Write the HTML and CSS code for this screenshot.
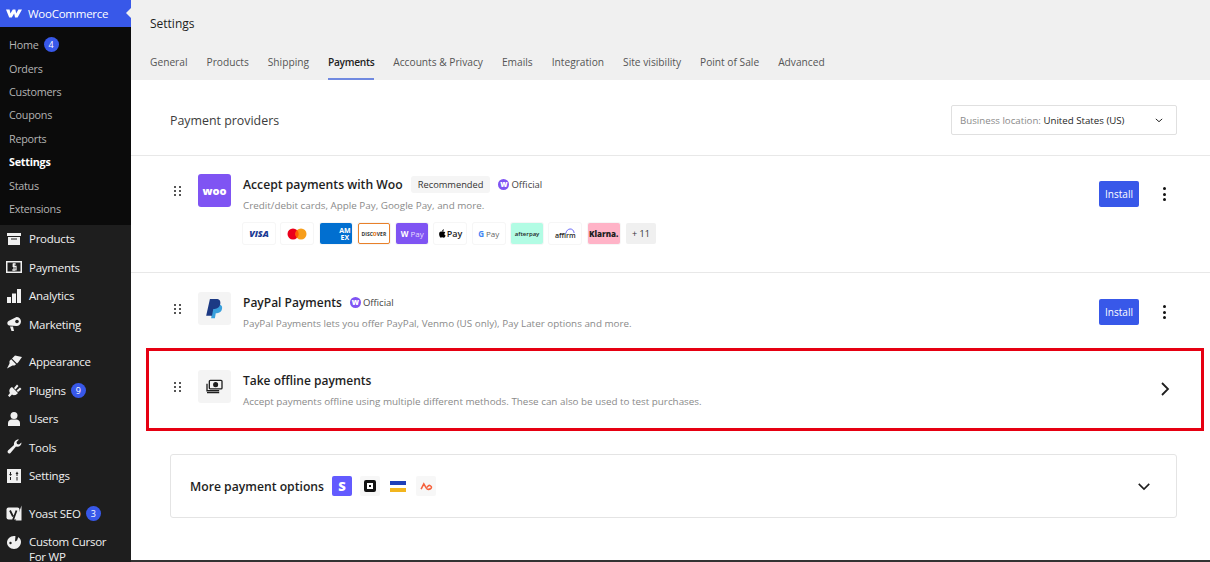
FILE: index.html
```html
<!DOCTYPE html>
<html lang="en">
<head>
    <meta charset="UTF-8">
    <title>Settings - Payments</title>
    <link rel="stylesheet" href="styles.css">
</head>
<body>
    <div class="layout">
        <aside class="sidebar">
            <div class="woo-head">
                <svg class="woo-logo" viewBox="0 0 20 11"><path d="M0 .5h4.500l1 5 3-5h3.200l1 5 2.800-5H20l-5.500 10h-3.200l-1.100-5-3 5H4z"/></svg>
                <span>WooCommerce</span>
                <i class="woo-arrow"></i>
            </div>
            <ul class="submenu">
                <li>Home <b class="count">4</b></li>
                <li>Orders</li>
                <li>Customers</li>
                <li>Coupons</li>
                <li>Reports</li>
                <li class="submenu-current">Settings</li>
                <li>Status</li>
                <li>Extensions</li>
            </ul>
            <ul class="menu">
                <li><svg viewBox="0 0 16 16"><path d="M1 2h14v3H1zM2 6h12v8H2z"/><path fill="#1e1e1e" d="M5 7.500h6v1H5z"/></svg>Products</li>
                <li><svg viewBox="0 0 16 16"><path fill-rule="evenodd" d="M0 2h16v12H0zM1.500 3.500v9h13v-9z"/><path d="M10 5H7.200v2.300H10V11H6M8 4v8" fill="none" stroke="#f0f0f0" stroke-width="1.200"/></svg>Payments</li>
                <li><svg viewBox="0 0 16 16"><path d="M1 9h4v6H1zM6 5.500h4V15H6zM11 1h4v14h-4z"/></svg>Analytics</li>
                <li class="menu-group-end"><svg viewBox="0 0 16 16"><path d="M10.500 1a4.500 4.500 0 1 1 0 9L3 9.500a2.500 2.500 0 0 1-.5-4.500zM4 10.500h3L8 15H5.500z"/><circle cx="11" cy="5.500" r="1.800" fill="#1e1e1e"/></svg>Marketing</li>
                <li><svg viewBox="0 0 16 16"><path d="M16 3L9 1.500 6 4.500l5 5 1.500-1.500zM5.200 5.300l4.900 4.900-1.600 1.300H6.500L1 14.500 3.500 9.500V7z"/></svg>Appearance</li>
                <li><svg viewBox="0 0 16 16"><path d="M6 5l6 6-1 1c-1.500 1.500-4 1.500-5 .5L3.500 15 2 13.500 4 11c-1-1-1-3.500.5-5zM8 6l3-3.500L12.500 4 9.500 7.500zM10.500 8.500L14 5.500 15.500 7 12 10z"/></svg>Plugins <b class="count">9</b></li>
                <li><svg viewBox="0 0 16 16"><circle cx="8" cy="4.500" r="3.500"/><path d="M2 15v-3c0-2 2-3.500 3.500-3.500h5c1.500 0 3.500 1.500 3.500 3.500v3z"/></svg>Users</li>
                <li><svg viewBox="0 0 16 16"><path d="M15.500 3.500c0 3-2.500 5-5.500 4L4.500 14c-1.500 1.500-4-.5-2.500-2.500l6-5.500C7.500 3 10 0 13 .5L10.500 3l.5 2 2 .5z"/></svg>Tools</li>
                <li class="menu-group-end"><svg viewBox="0 0 16 16"><path fill-rule="evenodd" d="M1 1h14v14H1zM4 4v2H3l1.500 2L6 6H5V4zM4 9v3h1V9zM11 3.500L9.500 6H10.500v2h1V6h1zM10.500 9v3.500h1V9z"/></svg>Settings</li>
                <li><svg viewBox="0 0 16 16"><rect x="0.500" y="2.500" width="13" height="12" rx="2"/><path d="M4 5.500l3 6M10.500 5.500L7 15" fill="none" stroke="#1e1e1e" stroke-width="1.800"/><path d="M15.500 0.500L11 13l-1.500 2.500h6z"/></svg>Yoast SEO <b class="count">3</b></li>
                <li class="menu-tall"><svg viewBox="0 0 16 16"><path d="M8 2c4 0 7 2.500 7 6s-3 7-7 7-7-3-7-6.500S4 2 8 2z"/><path d="M9.500 1.500L13 1 11 6.500 9 7.500z" fill="#1e1e1e"/><circle cx="4.500" cy="9" r="1.200" fill="#1e1e1e"/></svg><span>Custom Cursor<br>For WP</span></li>
            </ul>
        </aside>

        <main class="main">
            <header class="page-head">
                <h1 class="page-title">Settings</h1>
                <nav class="tabs">
                    <a>General</a>
                    <a>Products</a>
                    <a>Shipping</a>
                    <a class="tab-active">Payments</a>
                    <a>Accounts &amp; Privacy</a>
                    <a>Emails</a>
                    <a>Integration</a>
                    <a>Site visibility</a>
                    <a>Point of Sale</a>
                    <a>Advanced</a>
                </nav>
            </header>

            <div class="providers-head">
                <h2>Payment providers</h2>
                <div class="location">
                    <span><em>Business location:</em> United States (US)</span>
                    <svg class="chev-small" viewBox="0 0 10 6"><path d="M1 1l4 3.500L9 1" fill="none" stroke="#1e1e1e" stroke-width="1.200"/></svg>
                </div>
            </div>

            <section class="provider provider--woo">
                <span class="drag"><i></i><i></i><i></i><i></i><i></i><i></i></span>
                <div class="provider-icon provider-icon--woo">woo</div>
                <div class="provider-body">
                    <div class="provider-title">
                        <strong>Accept payments with Woo</strong>
                        <span class="tag">Recommended</span>
                        <span class="official"><i class="official-badge">w</i>Official</span>
                    </div>
                    <p class="provider-desc">Credit/debit cards, Apple Pay, Google Pay, and more.</p>
                    <div class="pay-logos">
                        <span class="pay pay-visa">VISA</span>
                        <span class="pay pay-mc"><svg viewBox="0 0 20 12" width="20" height="12"><circle cx="6" cy="6" r="5.500" fill="#eb001b"/><circle cx="14" cy="6" r="5.500" fill="#f79e1b"/><path d="M10 2a5.500 5.500 0 0 1 0 8 5.500 5.500 0 0 1 0-8z" fill="#ff5f00"/></svg></span>
                        <span class="pay pay-amex">AM<br>EX</span>
                        <span class="pay pay-discover">DISC<b>O</b>VER</span>
                        <span class="pay pay-woopay"><b>W</b> Pay</span>
                        <span class="pay pay-apple"><svg viewBox="0 0 10 12" width="7" height="9"><path d="M7 0c0 1.500-1 3-2.500 3C4.500 1.500 5.500.300 7 0zM1 4c1-1.200 2.500-1 3.500-.500C5.500 3 7.500 2.800 9 4.500 7 6 7.500 8.500 9.500 9 9 10.500 8 12 7 12s-1.500-.500-2.500-.500S3 12 2.500 12C1 12-1 6.500 1 4z"/></svg>Pay</span>
                        <span class="pay pay-gpay"><b>G</b> Pay</span>
                        <span class="pay pay-afterpay">afterpay</span>
                        <span class="pay pay-affirm">affirm<svg class="affirm-arc" viewBox="0 0 12 8"><path d="M1 7.500C2 1 10 0 11 7" fill="none" stroke="#4a4af4" stroke-width="1"/></svg></span>
                        <span class="pay pay-klarna">Klarna.</span>
                        <span class="pay pay-more">+ 11</span>
                    </div>
                </div>
                <div class="provider-actions">
                    <button class="install">Install</button>
                    <span class="kebab"><i></i><i></i><i></i></span>
                </div>
            </section>

            <section class="provider provider--paypal">
                <span class="drag"><i></i><i></i><i></i><i></i><i></i><i></i></span>
                <div class="provider-icon">
                    <svg viewBox="0 0 20 24" width="17" height="20"><path fill="#3aa0dc" d="M8 7h8c3 0 3.500 3 3 5-.5 3-3 5-6 5h-1.500L10.500 23H6z"/><path fill="#1c3a84" d="M4.500 0H12c4 0 5.500 2.500 5 5.500C16.500 9.500 13.500 12 10 12H8.500L7 20H0z"/></svg>
                </div>
                <div class="provider-body">
                    <div class="provider-title">
                        <strong>PayPal Payments</strong>
                        <span class="official"><i class="official-badge">w</i>Official</span>
                    </div>
                    <p class="provider-desc">PayPal Payments lets you offer PayPal, Venmo (US only), Pay Later options and more.</p>
                </div>
                <div class="provider-actions">
                    <button class="install">Install</button>
                    <span class="kebab"><i></i><i></i><i></i></span>
                </div>
            </section>

            <section class="provider provider--offline">
                <div class="annotation"></div>
                <span class="drag"><i></i><i></i><i></i><i></i><i></i><i></i></span>
                <div class="provider-icon">
                    <svg viewBox="0 0 18 16" width="17" height="15" fill="none" stroke="#1e1e1e" stroke-width="1.400"><rect x="3.500" y="1.500" width="13.500" height="9" rx="1"/><circle cx="10.200" cy="6" r="2" fill="#1e1e1e"/><path d="M1 5v7.500h13M1 14.500h13"/></svg>
                </div>
                <div class="provider-body">
                    <div class="provider-title"><strong>Take offline payments</strong></div>
                    <p class="provider-desc">Accept payments offline using multiple different methods. These can also be used to test purchases.</p>
                </div>
                <div class="provider-actions">
                    <svg class="chev-right" viewBox="0 0 10 16"><path d="M2 2l6 6-6 6" fill="none" stroke="#1e1e1e" stroke-width="1.800"/></svg>
                </div>
            </section>

            <section class="more-options">
                <strong>More payment options</strong>
                <span class="more-logo more-stripe">S</span>
                <span class="more-logo more-square"><i></i></span>
                <span class="more-logo more-stripes"><i></i><i></i></span>
                <span class="more-logo more-airwallex"><svg viewBox="0 0 14 10" width="13" height="9"><path d="M1 8l3-6 3 5c1 1.500 3 1.500 4.500.5S13 5 11 4 8.500 5 7.500 6" fill="none" stroke="#f5613c" stroke-width="1.700"/></svg></span>
                <svg class="chev-down" viewBox="0 0 16 10"><path d="M2 2l6 6 6-6" fill="none" stroke="#1e1e1e" stroke-width="1.800"/></svg>
            </section>
        </main>
    </div>
</body>
</html>
```

FILE: styles.css
```css
:root {
    --clr-blue: #3858e9;
    --clr-text: #1e1e1e;
    --clr-muted: #8a8a8a;
    --clr-border: #e8e8e8;
    --clr-purple: #7f54f3;
    --font-family: "Open Sans", "Noto Sans", sans-serif;
}

* {
    margin: 0;
    padding: 0;
    box-sizing: border-box;
}

html, body {
    height: 562px;
    overflow: hidden;
}

body {
    font-family: var(--font-family);
    color: var(--clr-text);
    background: #fff;
}

ul {
    list-style: none;
}

.layout {
    display: flex;
    height: 562px;
}

/* Sidebar */
.sidebar {
    width: 131px;
    flex-shrink: 0;
    background: #1e1e1e;
    color: #f0f0f0;
    overflow: hidden;
    font-size: 11.500px;
    letter-spacing: -0.25px;
}

.woo-head {
    height: 27px;
    display: flex;
    align-items: center;
    gap: 6px;
    padding-left: 6px;
    background: var(--clr-blue);
    color: #fff;
    position: relative;
}

.woo-logo {
    width: 16px;
    height: 9px;
    fill: #fff;
}

.woo-arrow {
    position: absolute;
    right: 0;
    top: 8px;
    border: 5px solid transparent;
    border-right-color: #f0f0f0;
    border-left: 0;
}

.submenu {
    height: 198px;
    padding-top: 6px;
    background: #0b0b0b;
    color: #b4b4b4;
    font-size: 10.800px;
}

.submenu li {
    height: 23.400px;
    padding-left: 9px;
    display: flex;
    align-items: center;
    gap: 5px;
}

.submenu .submenu-current {
    color: #fff;
    font-weight: 700;
}

.count {
    width: 15px;
    height: 15px;
    border-radius: 50%;
    background: var(--clr-blue);
    color: #fff;
    font-size: 9px;
    font-weight: 400;
    line-height: 15px;
    text-align: center;
    letter-spacing: 0;
}

.menu {
    margin-top: -0.500px;
}

.menu li {
    height: 28.500px;
    display: flex;
    align-items: center;
    gap: 7px;
    padding-left: 6px;
}

.menu li svg {
    width: 16px;
    height: 16px;
    fill: #f0f0f0;
    flex-shrink: 0;
}

.menu li .count {
    margin-left: -2px;
}

.menu .menu-group-end {
    margin-bottom: 9px;
}

.menu .menu-tall {
    height: 36px;
    align-items: flex-start;
    line-height: 15px;
    padding-top: 6px;
}

/* Header + tabs */
.main {
    flex: 1;
    min-width: 0;
    border-bottom: 2px solid #333;
}

.page-head {
    height: 80px;
    background: #f0f0f0;
    padding-left: 19px;
    display: flex;
    flex-direction: column;
}

.page-title {
    font-size: 12px;
    font-weight: 500;
    padding-top: 15px;
    height: 46px;
}

.tabs {
    display: flex;
    gap: 19px;
    font-size: 10.200px;
    color: #555;
    font-weight: 500;
}

.tabs a {
    height: 34px;
    padding-top: 9px;
}

.tabs .tab-active {
    color: var(--clr-text);
    font-weight: 600;
    letter-spacing: -0.3px;
    border-bottom: 2px solid #7089e0;
}

/* Providers */
.providers-head {
    height: 76px;
    display: flex;
    align-items: center;
    justify-content: space-between;
    padding: 5px 33px 0 39px;
    border-bottom: 1px solid var(--clr-border);
}

.providers-head h2 {
    font-size: 12.400px;
    font-weight: 500;
    color: #3c3c3c;
}

.location {
    width: 226px;
    height: 30px;
    padding: 0 8px;
    display: flex;
    align-items: center;
    justify-content: space-between;
    border: 1px solid #e0e0e0;
    border-radius: 2px;
    font-size: 9.700px;
}

.location em {
    font-style: normal;
    color: var(--clr-muted);
}

.chev-small {
    width: 8px;
    height: 5px;
    margin-right: 5px;
}

.provider {
    position: relative;
    display: flex;
    align-items: flex-start;
    padding-left: 43px;
}

.provider--woo {
    height: 117px;
    padding-top: 18px;
    border-bottom: 1px solid var(--clr-border);
}

.provider--paypal {
    height: 76px;
    padding-top: 19px;
}

.provider--offline {
    height: 81px;
    padding-top: 21px;
}

.drag {
    width: 7px;
    margin-top: 12px;
    margin-right: 17px;
    display: grid;
    grid-template-columns: 2px 2px;
    column-gap: 3px;
    row-gap: 2px;
}

.drag i {
    width: 2px;
    height: 2px;
    background: #555;
}

.provider-icon {
    width: 33px;
    height: 33px;
    border-radius: 3px;
    background: #f4f4f4;
    display: flex;
    align-items: center;
    justify-content: center;
    flex-shrink: 0;
}

.provider-icon--woo {
    background: var(--clr-purple);
    color: #fff;
    font-size: 11px;
    font-weight: 800;
}

.provider-body {
    margin-left: 12px;
    flex: 1;
}

.provider-title {
    display: flex;
    align-items: center;
    height: 21px;
    gap: 8px;
}

.provider-title strong {
    font-size: 12px;
    font-weight: 600;
}

.provider--woo .provider-title strong {
    font-size: 12.200px;
}

.provider-desc {
    font-size: 9.850px;
    line-height: 20px;
    color: var(--clr-muted);
}

.tag {
    font-size: 9.300px;
    background: #f5f5f5;
    border-radius: 3px;
    padding: 2px 7px;
    color: #333;
}

.official {
    display: flex;
    align-items: center;
    gap: 2px;
    font-size: 9.500px;
    color: #444;
}

.official-badge {
    width: 11px;
    height: 11px;
    border-radius: 50%;
    background: var(--clr-purple);
    color: #fff;
    font-size: 8px;
    font-style: normal;
    font-weight: 800;
    line-height: 9px;
    text-align: center;
}

.pay-logos {
    display: flex;
    gap: 6.300px;
    margin-top: 8px;
}

.pay {
    position: relative;
    width: 32px;
    height: 21px;
    flex-shrink: 0;
    display: flex;
    align-items: center;
    justify-content: center;
    border-radius: 2px;
    background: #fff;
    box-shadow: 0 0 0 1px #f6f6f6;
    font-size: 8px;
    white-space: nowrap;
    overflow: hidden;
}

.pay-visa {
    color: #1a3a94;
    font-size: 9px;
    font-weight: 800;
    font-style: italic;
}

.pay-amex {
    background: #016fd0;
    color: #fff;
    font-size: 7px;
    line-height: 7px;
    font-weight: 700;
    justify-content: flex-end;
    padding-right: 1px;
    text-align: center;
}

.pay-discover {
    border: 1px solid #e8802a;
    font-size: 5px;
    font-weight: 700;
    color: #333;
}

.pay-discover b {
    color: #e8802a;
}

.pay-woopay {
    background: var(--clr-purple);
    color: #e6dcff;
    gap: 2px;
}

.pay-woopay b {
    color: #fff;
}

.pay-apple {
    font-weight: 600;
    gap: 1px;
    font-size: 9px;
}

.pay-gpay {
    color: #666;
    gap: 2px;
}

.pay-gpay b {
    color: #4285f4;
}

.pay-afterpay {
    background: #b2fce4;
    font-size: 6px;
    font-weight: 600;
}

.pay-affirm {
    font-size: 7px;
    font-weight: 600;
    padding-top: 3px;
}

.affirm-arc {
    position: absolute;
    right: 6px;
    top: 4px;
    width: 10px;
    height: 7px;
}

.pay-klarna {
    background: #ffb3c7;
    font-weight: 800;
}

.pay-more {
    width: 30px;
    background: #f0f0f0;
    box-shadow: none;
    font-size: 9px;
    color: #333;
}

.provider-actions {
    width: 111px;
    height: 33px;
    margin-top: 3.500px;
    gap: 24px;
    display: flex;
    align-items: center;
    flex-shrink: 0;
}

.install {
    width: 40px;
    height: 26px;
    background: var(--clr-blue);
    color: #fff;
    border: none;
    border-radius: 2px;
    font-family: inherit;
    font-size: 10px;
}

.kebab {
    display: flex;
    flex-direction: column;
    gap: 2.500px;
}

.kebab i {
    width: 3px;
    height: 3px;
    border-radius: 50%;
    background: #111;
}

.provider--offline .provider-actions {
    margin-top: 2px;
}

.chev-right {
    width: 10px;
    height: 16px;
    margin-left: 61px;
}

/* Red callout from the screenshot */
.annotation {
    position: absolute;
    inset: -1px 6px -1px 15px;
    border: 3px solid #e60012;
    pointer-events: none;
}

.more-options {
    height: 64px;
    margin: 24px 33px 0 39px;
    padding: 0 25px 0 19px;
    display: flex;
    align-items: center;
    gap: 8px;
    border: 1px solid #e4e4e4;
    border-radius: 3px;
}

.more-options strong {
    font-size: 12.200px;
    font-weight: 600;
}

.more-logo {
    width: 20px;
    height: 20px;
    display: flex;
    align-items: center;
    justify-content: center;
    border-radius: 2px;
    background: #f7f7f7;
}

.more-stripe {
    background: #635bff;
    color: #fff;
    font-weight: 800;
    font-size: 13px;
}

.more-square i {
    width: 12px;
    height: 12px;
    border: 3px solid #111;
    border-radius: 2px;
    background: radial-gradient(#111 35%, #fff 36%);
}

.more-stripes {
    flex-direction: column;
    gap: 3px;
    background: none;
}

.more-stripes i {
    width: 16px;
    height: 4px;
    background: #1f3fb8;
}

.more-stripes i + i {
    background: #f2b51e;
}

.chev-down {
    width: 14px;
    height: 9px;
    margin-left: auto;
}
```
